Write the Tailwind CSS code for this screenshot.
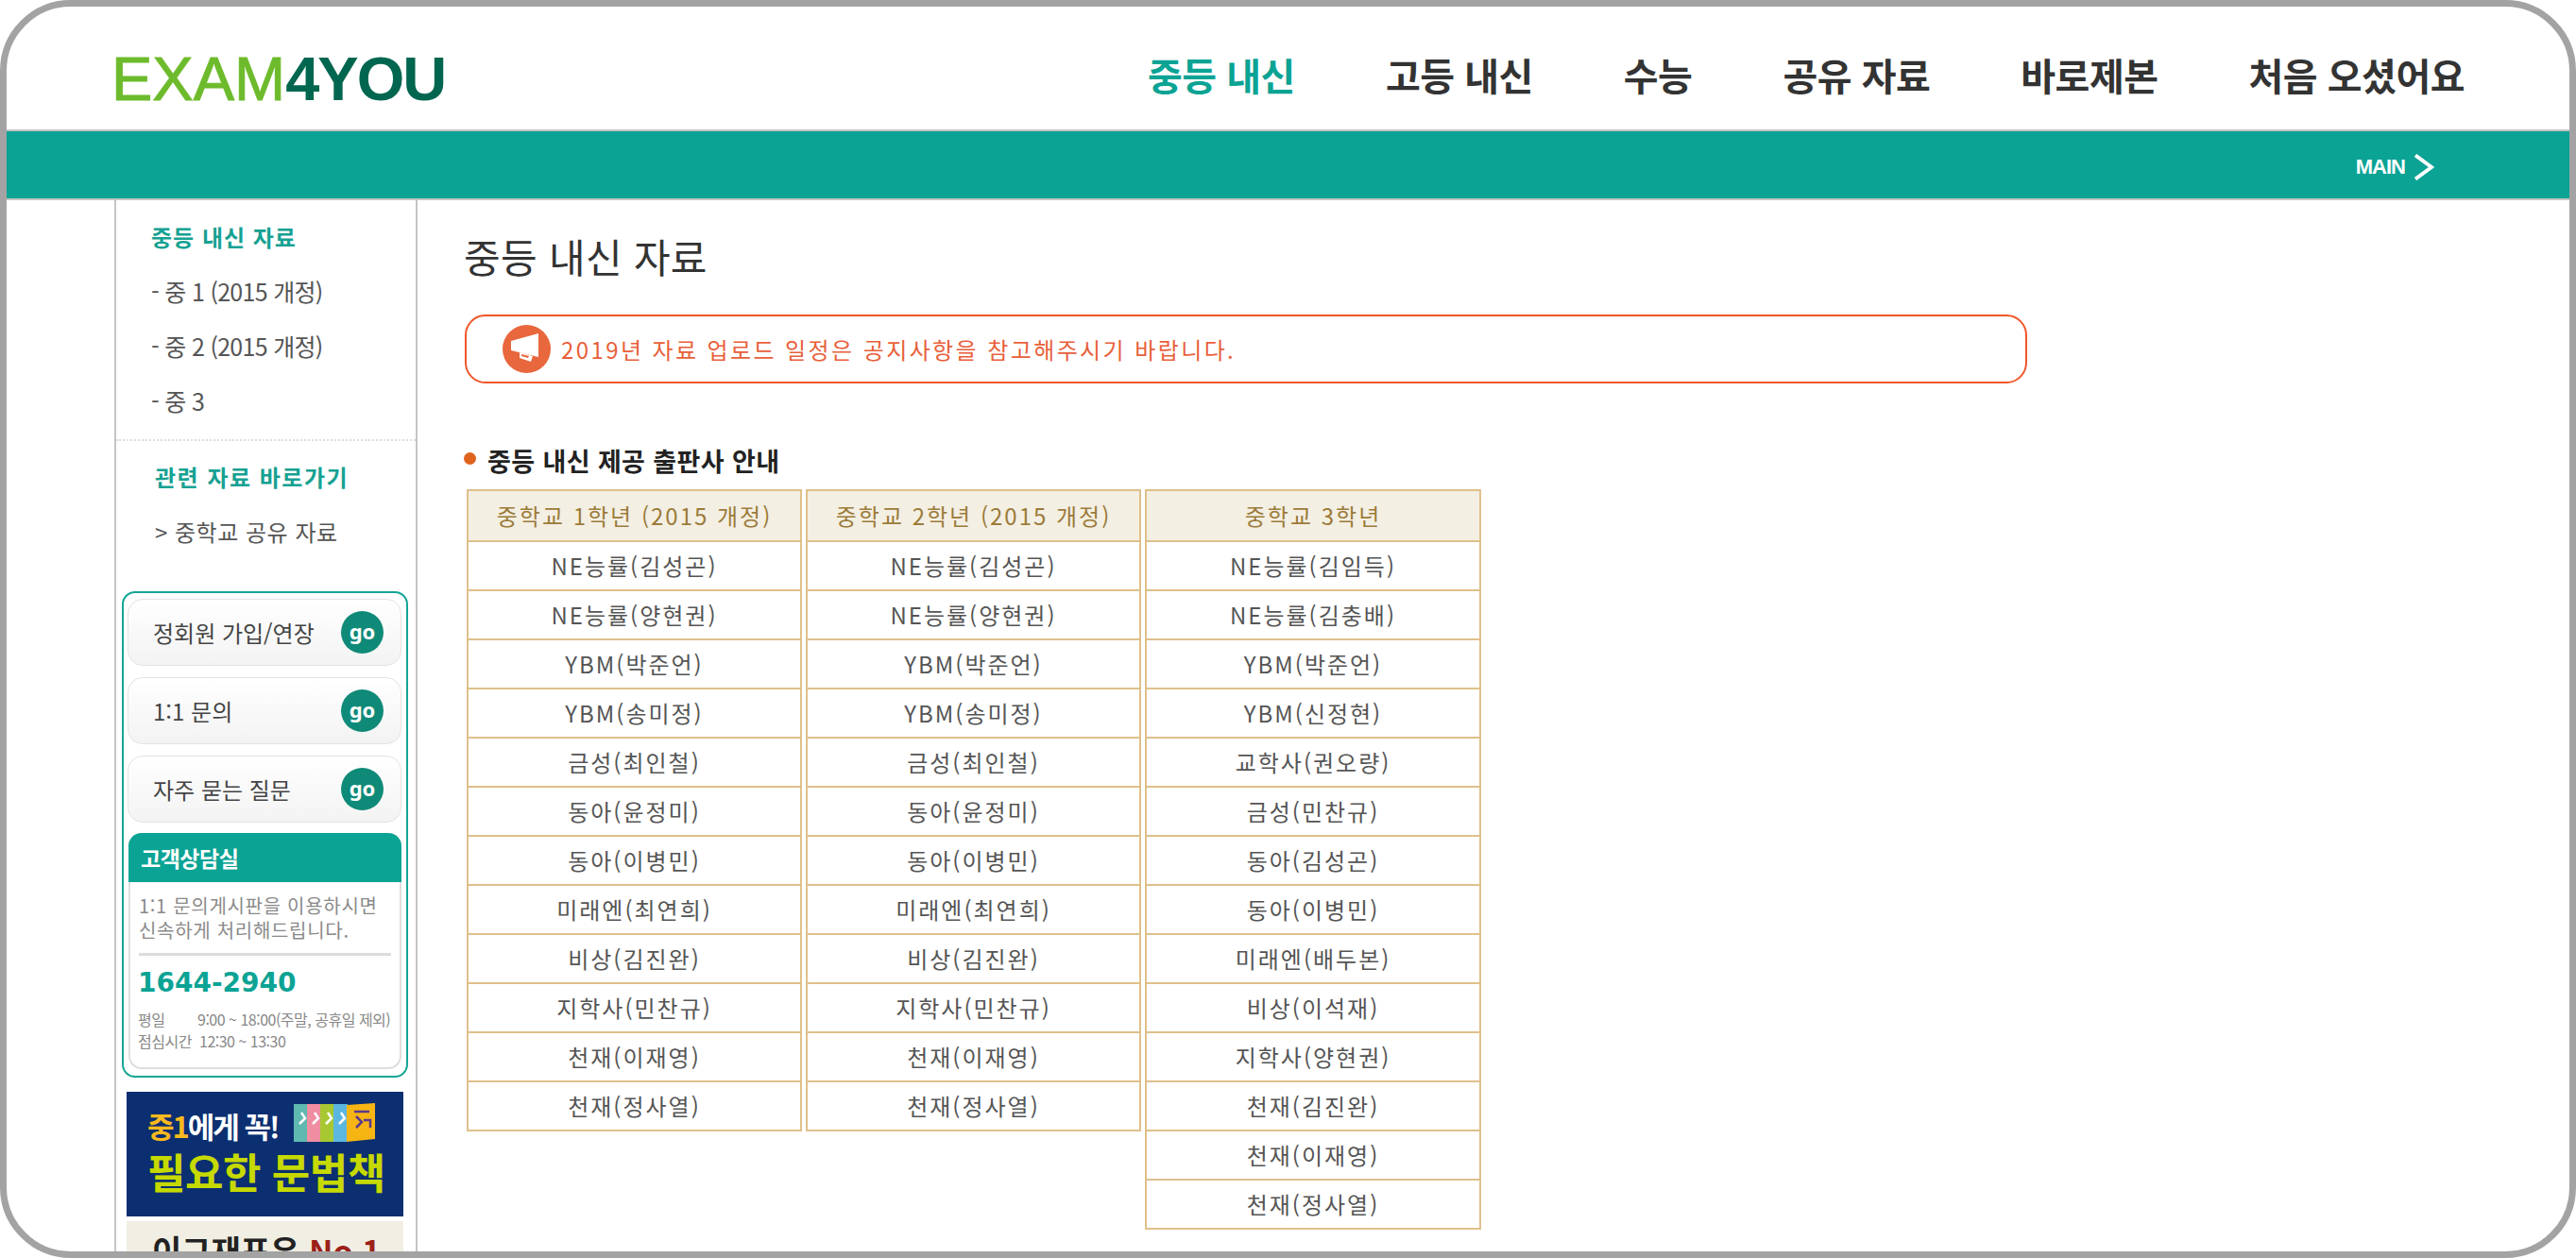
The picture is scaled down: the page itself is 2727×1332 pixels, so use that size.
<!DOCTYPE html>
<html lang="ko">
<head>
    <meta charset="UTF-8">
    <title>EXAM4YOU</title>
    <script src="https://cdn.jsdelivr.net/npm/@tailwindcss/browser@4"></script>
</head>
<body class="bg-white font-['Noto_Sans_CJK_KR','Noto_Sans',sans-serif]">

<div class="w-[2727px] h-[1332px] border-[7px] border-[#a3a3a3] rounded-[75px] overflow-hidden bg-white flex flex-col">

    <!-- header -->
    <header class="h-[130px] shrink-0 flex items-center pl-[111px]">
        <div class="font-['Liberation_Sans',sans-serif] text-[65px] leading-none mt-[23px] flex">
            <span class="text-[#6dbb2c] tracking-[0px] [-webkit-text-stroke:1px_#6dbb2c]">EXAM</span><span class="text-[#00664f] font-bold tracking-[-2px]">4YOU</span>
        </div>
        <nav class="ml-auto mr-[111px] flex gap-[96px] text-[40px] leading-none font-bold text-[#333] tracking-[-0.5px] mt-[14px]">
            <a class="text-[#0ba394]">중등 내신</a>
            <a>고등 내신</a>
            <a>수능</a>
            <a>공유 자료</a>
            <a>바로제본</a>
            <a>처음 오셨어요</a>
        </nav>
    </header>

    <!-- teal bar -->
    <div class="h-[75px] shrink-0 bg-[#0ba394] border-y-2 border-[#c4c4c4] flex items-center justify-end pr-[143px] pt-[4px] text-white">
        <span class="font-['Liberation_Sans',sans-serif] text-[22px] font-bold tracking-[-1px] mr-[9px]">MAIN</span>
        <svg class="w-[22px] h-[28px]" viewBox="0 0 22 28" fill="none" stroke="white" stroke-width="4"><path d="M2 1.5 L19 14 L2 26.5"/></svg>
    </div>

    <div class="flex flex-1 min-h-0">
        <!-- sidebar -->
        <aside class="w-[321px] ml-[114px] shrink-0 border-x-2 border-[#c4c4c4] text-[#555]">
            <ul class="pt-[10px] pl-[37px] pb-[11px] border-b-2 border-dotted border-[#ddd] text-[25px]">
                <li class="h-[58px] flex items-center font-bold text-[#16a192] tracking-[1px] text-[24px]">중등 내신 자료</li>
                <li class="h-[58px] flex items-center tracking-[-0.7px]">- 중 1 (2015 개정)</li>
                <li class="h-[58px] flex items-center tracking-[-0.7px]">- 중 2 (2015 개정)</li>
                <li class="h-[58px] flex items-center tracking-[-0.7px]">- 중 3</li>
            </ul>
            <ul class="pt-[9px] pl-[41px] text-[24px]">
                <li class="h-[58px] flex items-center font-bold text-[#16a192] tracking-[1.5px]">관련 자료 바로가기</li>
                <li class="h-[58px] flex items-center tracking-[0.5px]">&gt; 중학교 공유 자료</li>
            </ul>

            <div class="mt-[34px] ml-[6px] w-[303px] h-[515px] border-2 border-[#14a595] rounded-[14px] pt-[6px] pl-[4px]">
                <div class="w-[290px] flex flex-col gap-[12px] text-[24px] text-[#444]">
                    <a class="h-[71px] border border-[#e3e3e3] rounded-[16px] bg-gradient-to-b from-white to-[#f3f3f3] flex items-center justify-between pl-[26px] pr-[18px]">
                        <span>정회원 가입/연장</span>
                        <span class="w-[45px] h-[45px] rounded-full bg-[#0f8a78] text-white text-[22px] font-bold flex items-center justify-center font-['Noto_Sans',sans-serif] pb-[3px]">go</span>
                    </a>
                    <a class="h-[71px] border border-[#e3e3e3] rounded-[16px] bg-gradient-to-b from-white to-[#f3f3f3] flex items-center justify-between pl-[26px] pr-[18px]">
                        <span>1:1 문의</span>
                        <span class="w-[45px] h-[45px] rounded-full bg-[#0f8a78] text-white text-[22px] font-bold flex items-center justify-center font-['Noto_Sans',sans-serif] pb-[3px]">go</span>
                    </a>
                    <a class="h-[71px] border border-[#e3e3e3] rounded-[16px] bg-gradient-to-b from-white to-[#f3f3f3] flex items-center justify-between pl-[26px] pr-[18px]">
                        <span>자주 묻는 질문</span>
                        <span class="w-[45px] h-[45px] rounded-full bg-[#0f8a78] text-white text-[22px] font-bold flex items-center justify-center font-['Noto_Sans',sans-serif] pb-[3px]">go</span>
                    </a>
                </div>

                <div class="mt-[11px] ml-[1px] w-[289px] h-[250px] border-2 border-t-0 border-[#dedede] rounded-[14px]">
                    <h3 class="-mx-[2px] h-[52px] bg-[#0ba394] rounded-t-[14px] flex items-center pl-[13px] text-white font-bold text-[23px] tracking-[-0.5px]">고객상담실</h3>
                    <p class="mt-[12px] px-[9px] text-[20px] leading-[26px] text-[#8a8a8a] tracking-[0.7px] whitespace-nowrap">1:1 문의게시판을 이용하시면<br>신속하게 처리해드립니다.</p>
                    <div class="mx-[9px] mt-[11px] h-[3px] bg-[#dcdcdc]"></div>
                    <p class="mt-[9px] px-[8px] font-['DejaVu_Sans',sans-serif] font-bold text-[28px] leading-[40px] text-[#0ba394]">1644-2940</p>
                    <div class="mt-[7px] px-[8px] text-[16px] leading-[23px] text-[#888] tracking-[-0.5px] whitespace-nowrap">
                        <p class="flex"><span class="w-[63px]">평일</span><span>9:00 ~ 18:00(주말, 공휴일 제외)</span></p>
                        <p class="flex"><span class="w-[65px]">점심시간</span><span>12:30 ~ 13:30</span></p>
                    </div>
                </div>
            </div>

            <!-- banners -->
            <div class="mt-[15px] ml-[11px] w-[293px] h-[132px] bg-[#0b2f70] pl-[22px] pt-[12px] overflow-hidden">
                <div class="flex items-start h-[42px]">
                    <span class="mt-[8px] text-[31px] font-bold tracking-[-2px] text-white leading-none whitespace-nowrap"><span class="text-[#f9b91e]">중1</span>에게 꼭!</span>
                    <svg class="ml-[16px] w-[86px] h-[42px] shrink-0" viewBox="0 0 86 42">
                        <rect width="15" height="40" y="1" fill="#5fb9b0"/>
                        <rect x="14" width="15" height="40" y="1" fill="#ef8ea0"/>
                        <rect x="28" width="15" height="40" y="1" fill="#a8c832"/>
                        <rect x="42" width="15" height="40" y="1" fill="#5cb7e0"/>
                        <path d="M56 2 L86 0 L86 38 L56 41 Z" fill="#f7b514"/>
                        <path d="M8 10 L12 16 L6 22 M22 10 L26 16 L20 22 M36 10 L40 16 L34 22 M50 10 L54 16 L48 22" fill="none" stroke="#fff" stroke-width="2.5"/>
                        <path d="M64 9 H80 M66 14 L72 20 L66 26 M74 18 H81 V26" fill="none" stroke="#5b3a8c" stroke-width="2.5"/>
                    </svg>
                </div>
                <p class="mt-[5px] text-[#c6d900] text-[44px] font-bold leading-[50px] tracking-[-0.5px] whitespace-nowrap">필요한 문법책</p>
            </div>
            <div class="mt-[5px] ml-[11px] w-[293px] h-[60px] bg-[#f1efe3] pl-[27px] pt-[6px] text-[34px] font-bold leading-[50px] text-[#222] whitespace-nowrap">이그재표유 <span class="text-[#9c1f1a]">No 1</span></div>
        </aside>

        <!-- main -->
        <main class="flex-1 pl-[49px]">
            <h1 class="mt-[31px] text-[42px] leading-[56px] text-[#333] tracking-[0.3px]">중등 내신 자료</h1>

            <div class="mt-[34px] ml-[1px] w-[1654px] h-[73px] border-2 border-[#f0562a] rounded-[22px] flex items-center pl-[38px] gap-[11px]">
                <svg class="w-[51px] h-[51px]" viewBox="0 0 51 51">
                    <circle cx="25.5" cy="25.5" r="25.5" fill="#e8673c"/>
                    <path d="M9 17 L38 9 L38 34 L9 27 Z" fill="white"/>
                    <path d="M18 29 L32 33 L30 39 L18 35 Z" fill="white"/>
                    <path d="M20 31 L28 33 L27 35 L20 33 Z" fill="#e8673c"/>
                </svg>
                <span class="text-[24px] text-[#e85f3a] tracking-[2.4px]">2019년 자료 업로드 일정은 공지사항을 참고해주시기 바랍니다.</span>
            </div>

            <h2 class="mt-[66px] flex items-center text-[27px] leading-[32px] font-bold text-[#222] tracking-[0.4px]">
                <span class="w-[13px] h-[13px] rounded-full bg-[#e0631e] mr-[12px] -mt-[6px]"></span>중등 내신 제공 출판사 안내
            </h2>

            <div class="mt-[14px] ml-[3px] flex items-start gap-[4px] text-[24px] text-[#555] text-center tracking-[2px]">
                <table class="w-[355px] border-collapse border-2 border-[#dfc08a] [&_td]:border-2 [&_td]:border-[#dfc08a] [&_td]:h-[52px] [&_td]:p-0 [&_th]:border-2 [&_th]:border-[#dfc08a]">
                    <thead><tr><th class="h-[54px] bg-[#f4efe3] font-normal text-[#9b7b3a]">중학교 1학년 (2015 개정)</th></tr></thead>
                    <tbody>
                        <tr><td>NE능률(김성곤)</td></tr>
                        <tr><td>NE능률(양현권)</td></tr>
                        <tr><td>YBM(박준언)</td></tr>
                        <tr><td>YBM(송미정)</td></tr>
                        <tr><td>금성(최인철)</td></tr>
                        <tr><td>동아(윤정미)</td></tr>
                        <tr><td>동아(이병민)</td></tr>
                        <tr><td>미래엔(최연희)</td></tr>
                        <tr><td>비상(김진완)</td></tr>
                        <tr><td>지학사(민찬규)</td></tr>
                        <tr><td>천재(이재영)</td></tr>
                        <tr><td>천재(정사열)</td></tr>
                    </tbody>
                </table>
                <table class="w-[355px] border-collapse border-2 border-[#dfc08a] [&_td]:border-2 [&_td]:border-[#dfc08a] [&_td]:h-[52px] [&_td]:p-0 [&_th]:border-2 [&_th]:border-[#dfc08a]">
                    <thead><tr><th class="h-[54px] bg-[#f4efe3] font-normal text-[#9b7b3a]">중학교 2학년 (2015 개정)</th></tr></thead>
                    <tbody>
                        <tr><td>NE능률(김성곤)</td></tr>
                        <tr><td>NE능률(양현권)</td></tr>
                        <tr><td>YBM(박준언)</td></tr>
                        <tr><td>YBM(송미정)</td></tr>
                        <tr><td>금성(최인철)</td></tr>
                        <tr><td>동아(윤정미)</td></tr>
                        <tr><td>동아(이병민)</td></tr>
                        <tr><td>미래엔(최연희)</td></tr>
                        <tr><td>비상(김진완)</td></tr>
                        <tr><td>지학사(민찬규)</td></tr>
                        <tr><td>천재(이재영)</td></tr>
                        <tr><td>천재(정사열)</td></tr>
                    </tbody>
                </table>
                <table class="w-[356px] border-collapse border-2 border-[#dfc08a] [&_td]:border-2 [&_td]:border-[#dfc08a] [&_td]:h-[52px] [&_td]:p-0 [&_th]:border-2 [&_th]:border-[#dfc08a]">
                    <thead><tr><th class="h-[54px] bg-[#f4efe3] font-normal text-[#9b7b3a]">중학교 3학년</th></tr></thead>
                    <tbody>
                        <tr><td>NE능률(김임득)</td></tr>
                        <tr><td>NE능률(김충배)</td></tr>
                        <tr><td>YBM(박준언)</td></tr>
                        <tr><td>YBM(신정현)</td></tr>
                        <tr><td>교학사(권오량)</td></tr>
                        <tr><td>금성(민찬규)</td></tr>
                        <tr><td>동아(김성곤)</td></tr>
                        <tr><td>동아(이병민)</td></tr>
                        <tr><td>미래엔(배두본)</td></tr>
                        <tr><td>비상(이석재)</td></tr>
                        <tr><td>지학사(양현권)</td></tr>
                        <tr><td>천재(김진완)</td></tr>
                        <tr><td>천재(이재영)</td></tr>
                        <tr><td>천재(정사열)</td></tr>
                    </tbody>
                </table>
            </div>
        </main>
    </div>
</div>

</body>
</html>
